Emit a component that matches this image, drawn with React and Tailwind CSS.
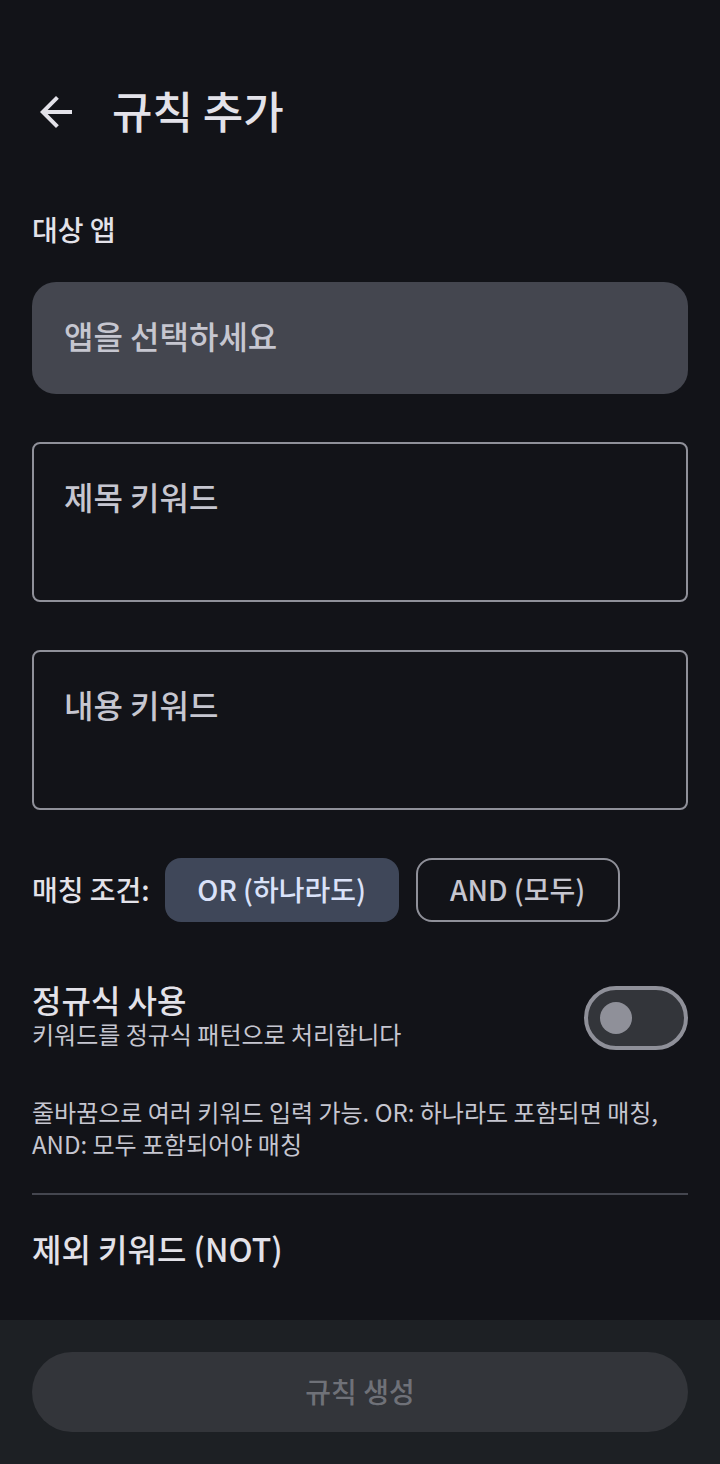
const font = { fontFamily: '"Noto Sans CJK KR", "Noto Sans", sans-serif' };

function OutlinedField({ label }) {
  return (
    <div className="h-[160px] rounded-[8px] border-2 border-[#8f9099] px-[30px] pt-[28px]">
      <p className="text-[32px] leading-[48px] font-medium text-[#c6c6d0]">{label}</p>
    </div>
  );
}

function BackArrow() {
  return (
    <svg viewBox="0 0 24 24" className="w-12 h-12" fill="#e3e2e9">
      <path d="M20 11H7.83l5.59-5.59L12 4l-8 8 8 8 1.41-1.41L7.83 13H20v-2z" />
    </svg>
  );
}

export default function App() {
  return (
    <div className="w-[720px] h-[1464px] bg-[#121318] text-[#e3e2e9] flex flex-col" style={font}>
      <div className="flex-1 flex flex-col px-8">
        {/* top bar */}
        <div className="flex items-center h-[112px] mt-[56px]">
          <BackArrow />
          <h1 className="ml-[32px] mb-[4px] text-[44px] leading-[56px] font-medium text-[#e3e2e9]">규칙 추가</h1>
        </div>

        <p className="mt-[41px] text-[28px] leading-[40px] font-medium text-[#e3e2e9]">대상 앱</p>

        <div className="mt-[33px] h-[112px] rounded-[24px] bg-[#44464f] flex items-center px-8 pb-[6px]">
          <span className="text-[32px] font-medium text-[#c6c6d0]">앱을 선택하세요</span>
        </div>

        <div className="mt-[48px]">
          <OutlinedField label="제목 키워드" />
        </div>
        <div className="mt-[48px]">
          <OutlinedField label="내용 키워드" />
        </div>

        {/* matching condition */}
        <div className="mt-[48px] flex items-center h-[64px]">
          <span className="text-[28px] font-medium text-[#e3e2e9] pb-[3px]">매칭 조건:</span>
          <button className="ml-[15px] h-[64px] w-[234px] rounded-[16px] bg-[#3f4759] text-[28px] font-medium text-[#dae2f9] pb-[3px]">
            OR (하나라도)
          </button>
          <button className="ml-[17px] h-[64px] w-[204px] rounded-[16px] border-2 border-[#8f9099] text-[28px] font-medium text-[#c6c6d0] pb-[3px]">
            AND (모두)
          </button>
        </div>

        {/* regex switch */}
        <div className="mt-[64px] flex items-center justify-between">
          <div className="flex flex-col -mt-[6px]">
            <span className="text-[32px] leading-[38px] font-medium text-[#e3e2e9]">정규식 사용</span>
            <span className="text-[24px] leading-[32px] text-[#c6c6d0]">키워드를 정규식 패턴으로 처리합니다</span>
          </div>
          <div className="w-[104px] h-[64px] rounded-full border-4 border-[#8f9099] bg-[#33353a] flex items-center pl-[12px]">
            <div className="w-8 h-8 rounded-full bg-[#8f9099]" />
          </div>
        </div>

        <p className="mt-[46px] text-[24px] leading-[32px] text-[#c6c6d0]">
          줄바꿈으로 여러 키워드 입력 가능. OR: 하나라도 포함되면 매칭,
          <br />
          AND: 모두 포함되어야 매칭
        </p>

        <div className="mt-[33px] h-[2px] bg-[#44464f]" />

        <p className="mt-[29px] text-[32px] leading-[48px] font-medium text-[#e3e2e9]">제외 키워드 (NOT)</p>
      </div>

      {/* bottom bar */}
      <div className="h-[144px] bg-[#1d2024] px-8 pt-[32px]">
        <button className="w-full h-[80px] rounded-full bg-[#33353a] text-[28px] font-medium text-[#6f7178] pb-[3px]">
          규칙 생성
        </button>
      </div>
    </div>
  );
}
